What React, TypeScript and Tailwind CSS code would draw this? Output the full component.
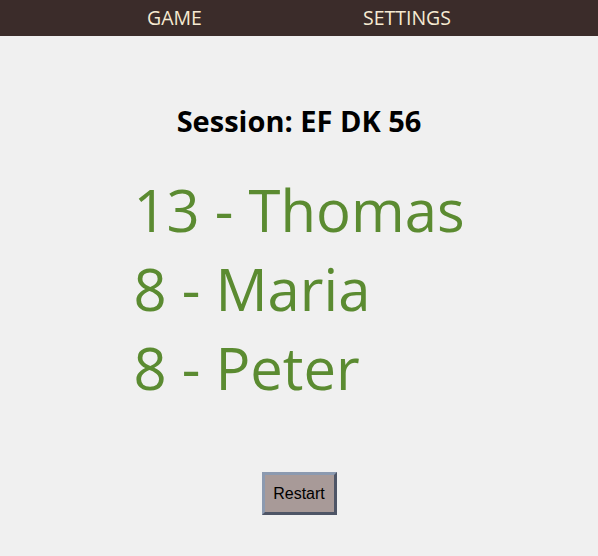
export default function App() {
  const scores = [
    { points: 13, name: 'Thomas' },
    { points: 8, name: 'Maria' },
    { points: 8, name: 'Peter' },
  ];

  return (
    <div className="min-h-[556px] bg-[#f0f0f0] font-['Open_Sans',sans-serif]">
      {/* Top navigation */}
      <nav className="h-9 bg-[#3b2c2a] flex items-center justify-center gap-[161px] text-[19.5px] text-[#f6ead2]">
        <a className="cursor-pointer">GAME</a>
        <a className="cursor-pointer">SETTINGS</a>
      </nav>

      <div className="flex flex-col items-center pt-[65px]">
        <h2 className="text-[29px] font-bold text-black leading-[40px]">Session: EF DK 56</h2>

        <div className="mt-[29px] text-[58px] leading-[79px] text-[#5b8b31]">
          {scores.map((s) => (
            <div key={s.name}>
              {s.points} - {s.name}
            </div>
          ))}
        </div>

        <button className="mt-[65px] w-[75px] h-[43px] bg-[#a89a98] border-[3px] border-t-[#8c9ab0] border-l-[#8c9ab0] border-b-[#4e5566] border-r-[#4e5566] font-['Liberation_Sans',sans-serif] text-base text-black">
          Restart
        </button>
      </div>
    </div>
  );
}
